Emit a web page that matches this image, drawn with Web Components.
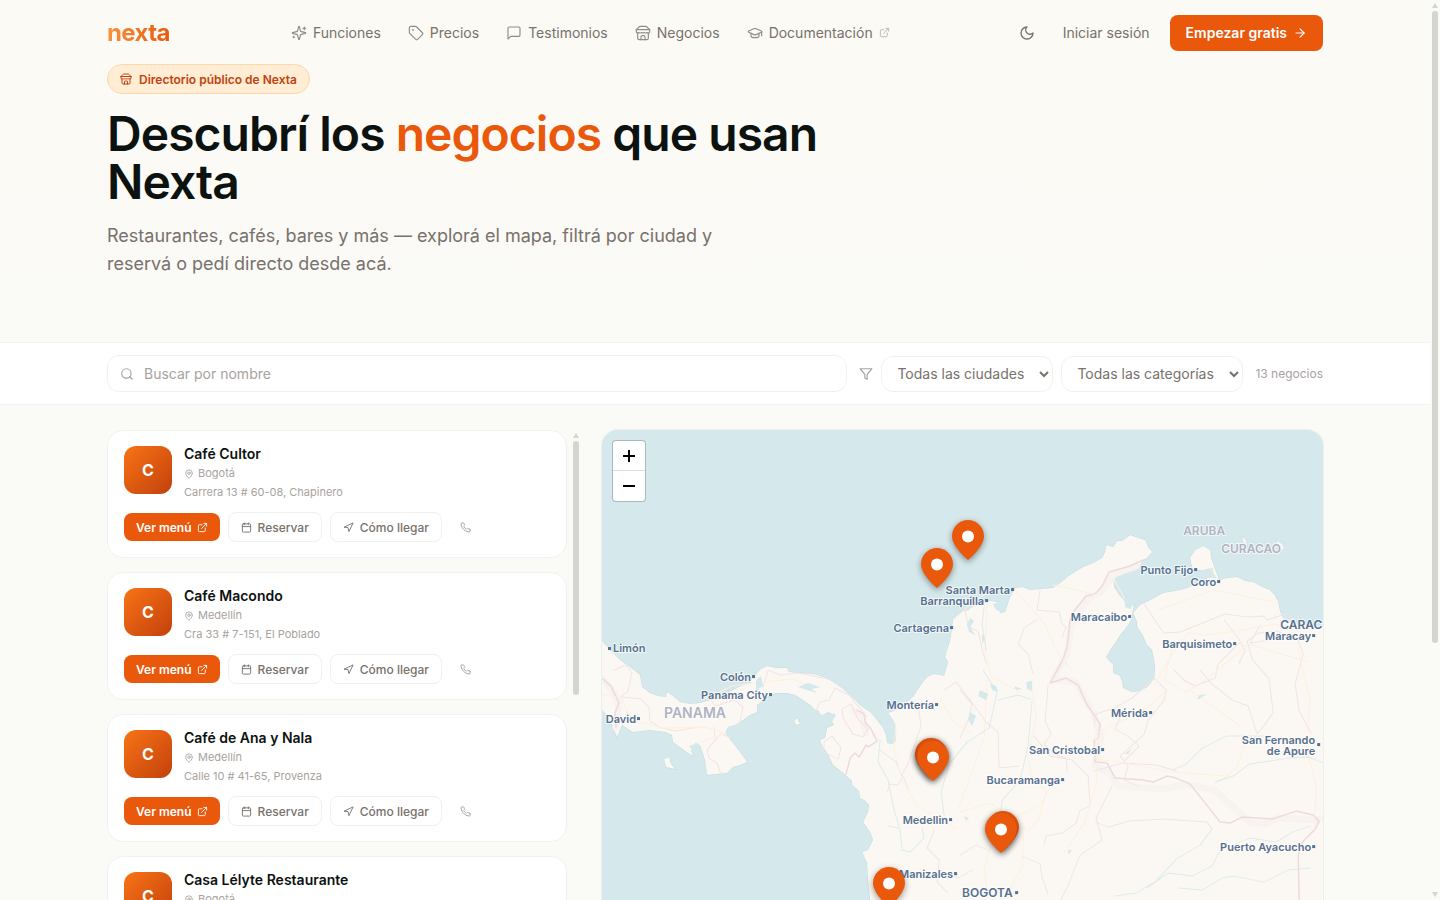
<!DOCTYPE html>
<html lang="es">
<head>
<meta charset="utf-8">
<meta name="viewport" content="width=device-width, initial-scale=1">
<title>Directorio de negocios · Nexta</title>
<style>
  body { margin: 0; background: #fafaf6; color: #78716c; font-family: Inter, "Liberation Sans", sans-serif; font-size: 14px; }
</style>
</head>
<body>
<nexta-app></nexta-app>

<script>
const base = `
  *, *::before, *::after { box-sizing: border-box; }
  :host { display: block; }
  :host([hidden]) { display: none; }
  a { color: inherit; text-decoration: none; }
  button, input, select { font: inherit; color: inherit; margin: 0; }
  button { cursor: pointer; }
  .wrap { max-width: 1280px; margin: 0 auto; padding: 0 32px; }
`;

function define(name, css, html, setup) {
  const template = document.createElement('template');
  customElements.define(name, class extends HTMLElement {
    constructor() {
      super();
      this.attachShadow({ mode: 'open' });
    }
    connectedCallback() {
      if (this.shadowRoot.childNodes.length) return;
      template.innerHTML = `<style>${base}${css}</style>` + (typeof html === 'function' ? html(this) : html);
      this.shadowRoot.append(template.content.cloneNode(true));
      if (setup) setup(this);
    }
  });
}

/* ---------- Icons (24-unit grid, stroked) ---------- */
const icons = {
  sparkles: '<path d="M9.937 15.5A2 2 0 0 0 8.5 14.063l-6.135-1.582a.5.5 0 0 1 0-.962L8.5 9.936A2 2 0 0 0 9.937 8.5l1.582-6.135a.5.5 0 0 1 .963 0L14.063 8.5A2 2 0 0 0 15.5 9.937l6.135 1.581a.5.5 0 0 1 0 .964L15.5 14.063a2 2 0 0 0-1.437 1.437l-1.582 6.135a.5.5 0 0 1-.963 0z"/><path d="M20 3v4M22 5h-4M4 17v2M5 18H3"/>',
  tag: '<path d="M12.586 2.586A2 2 0 0 0 11.172 2H4a2 2 0 0 0-2 2v7.172a2 2 0 0 0 .586 1.414l8.704 8.704a2.426 2.426 0 0 0 3.42 0l6.58-6.58a2.426 2.426 0 0 0 0-3.42z"/><circle cx="7.5" cy="7.5" r=".5" fill="currentColor"/>',
  message: '<path d="M21 15a2 2 0 0 1-2 2H7l-4 4V5a2 2 0 0 1 2-2h14a2 2 0 0 1 2 2z"/>',
  store: '<path d="m2 7 4.41-4.41A2 2 0 0 1 7.83 2h8.34a2 2 0 0 1 1.42.59L22 7"/><path d="M4 12v8a2 2 0 0 0 2 2h12a2 2 0 0 0 2-2v-8"/><path d="M15 22v-4a2 2 0 0 0-2-2h-2a2 2 0 0 0-2 2v4"/><path d="M2 7h20"/><path d="M22 7v3a2 2 0 0 1-2 2a2.7 2.7 0 0 1-1.59-.63.7.7 0 0 0-.82 0A2.7 2.7 0 0 1 16 12a2.7 2.7 0 0 1-1.59-.63.7.7 0 0 0-.82 0A2.7 2.7 0 0 1 12 12a2.7 2.7 0 0 1-1.59-.63.7.7 0 0 0-.82 0A2.7 2.7 0 0 1 8 12a2.7 2.7 0 0 1-1.59-.63.7.7 0 0 0-.82 0A2.7 2.7 0 0 1 4 12a2 2 0 0 1-2-2V7"/>',
  cap: '<path d="M21.42 10.922a1 1 0 0 0-.019-1.838L12.83 5.18a2 2 0 0 0-1.66 0L2.6 9.08a1 1 0 0 0 0 1.832l8.57 3.908a2 2 0 0 0 1.66 0z"/><path d="M22 10v6"/><path d="M6 12.5V16a6 3 0 0 0 12 0v-3.500"/>',
  external: '<path d="M15 3h6v6"/><path d="M10 14 21 3"/><path d="M18 13v6a2 2 0 0 1-2 2H5a2 2 0 0 1-2-2V8a2 2 0 0 1 2-2h6"/>',
  moon: '<path d="M12 3a6 6 0 0 0 9 9 9 9 0 1 1-9-9Z"/>',
  arrow: '<path d="M5 12h14"/><path d="m12 5 7 7-7 7"/>',
  search: '<circle cx="11" cy="11" r="8"/><path d="m21 21-4.300-4.300"/>',
  filter: '<path d="M22 3H2l8 9.460V19l4 2v-8.540z"/>',
  pin: '<path d="M20 10c0 4.993-5.539 10.193-7.399 11.799a1 1 0 0 1-1.202 0C9.539 20.193 4 14.993 4 10a8 8 0 0 1 16 0"/><circle cx="12" cy="10" r="3"/>',
  calendar: '<path d="M8 2v4M16 2v4"/><rect width="18" height="18" x="3" y="4" rx="2"/><path d="M3 10h18"/>',
  navigation: '<path d="m3 11 19-9-9 19-2-8z"/>',
  phone: '<path d="M22 16.920v3a2 2 0 0 1-2.180 2 19.790 19.790 0 0 1-8.630-3.070 19.500 19.500 0 0 1-6-6 19.790 19.790 0 0 1-3.070-8.670A2 2 0 0 1 4.110 2h3a2 2 0 0 1 2 1.720 12.840 12.840 0 0 0 .7 2.810 2 2 0 0 1-.45 2.110L8.090 9.910a16 16 0 0 0 6 6l1.270-1.270a2 2 0 0 1 2.110-.45 12.840 12.840 0 0 0 2.810.7A2 2 0 0 1 22 16.920z"/>'
};
define('nexta-icon', `
  :host { display: inline-flex; flex: none; width: var(--size, 16px); height: var(--size, 16px); }
  svg { width: 100%; height: 100%; display: block; }
`, el => `<svg viewBox="0 0 24 24" fill="none" stroke="currentColor" stroke-width="${el.getAttribute('weight') || 2}" stroke-linecap="round" stroke-linejoin="round" aria-hidden="true">${icons[el.getAttribute('name')]}</svg>`);

/* ---------- Scroll rail ---------- */
define('scroll-rail', `
  :host { display: flex; flex-direction: column; align-items: center; justify-content: space-between; flex: none; width: 10px; padding: 3px 0; gap: 3px; }
  .up, .down { width: 0; height: 0; border: 3px solid transparent; }
  .up { border-top: 0; border-bottom: 5px solid #d4d4d0; }
  .down { border-bottom: 0; border-top: 5px solid #d4d4d0; }
  .track { flex: 1; width: 6px; }
  .thumb { height: var(--thumb, 50%); border-radius: 3px; background: #d4d4d0; }
`, `<span class="up"></span><div class="track"><div class="thumb"></div></div><span class="down"></span>`);

/* ---------- Header ---------- */
define('nav-item', `
  :host { display: inline-flex; }
  a { display: flex; align-items: center; gap: 6px; line-height: 20px; white-space: nowrap; }
  .lead { opacity: .8; }
  .out { --size: 11px; opacity: .5; }
`, el => `<a href="#${el.getAttribute('to')}"><nexta-icon class="lead" name="${el.getAttribute('icon')}" weight="1.75"></nexta-icon><slot></slot>${el.hasAttribute('external') ? '<nexta-icon class="out" name="external"></nexta-icon>' : ''}</a>`);

define('site-header', `
  header.wrap { display: flex; align-items: center; justify-content: space-between; height: 64px; padding-top: 1px; }
  .logo { font-size: 24px; line-height: 32px; font-weight: 700; letter-spacing: -0.025em; background: linear-gradient(90deg, #fb923c, #ea580c); -webkit-background-clip: text; background-clip: text; color: transparent; }
  nav { display: flex; align-items: center; gap: 27px; }
  .actions { display: flex; align-items: center; gap: 20px; }
  .theme { display: grid; place-items: center; width: 32px; height: 32px; padding: 0; border: 0; background: none; }
  .cta { display: flex; align-items: center; gap: 6px; height: 36px; padding: 0 16px; border-radius: 8px; background: #ea580c; color: #fff; font-weight: 600; white-space: nowrap; --size: 14px; }
`, `
  <header class="wrap">
    <a class="logo" href="#inicio">nexta</a>
    <nav aria-label="Principal">
      <nav-item icon="sparkles" to="funciones">Funciones</nav-item>
      <nav-item icon="tag" to="precios">Precios</nav-item>
      <nav-item icon="message" to="testimonios">Testimonios</nav-item>
      <nav-item icon="store" to="negocios">Negocios</nav-item>
      <nav-item icon="cap" to="documentacion" external>Documentación</nav-item>
    </nav>
    <div class="actions">
      <button class="theme" type="button" aria-label="Cambiar tema"><nexta-icon name="moon"></nexta-icon></button>
      <a href="#iniciar">Iniciar sesión</a>
      <a class="cta" href="#empezar">Empezar gratis <nexta-icon name="arrow"></nexta-icon></a>
    </div>
  </header>`);

/* ---------- Hero ---------- */
define('page-hero', `
  .wrap { padding-bottom: 64px; }
  .pill { display: inline-flex; align-items: center; gap: 7px; height: 30px; padding: 0 12px; border: 1px solid #fed7aa; border-radius: 15px; background: #ffedd5; color: #c2410c; font-size: 12px; font-weight: 600; --size: 12px; vertical-align: top; }
  h1 { margin: 16px 0 0; max-width: 768px; font-size: 48px; line-height: 48px; font-weight: 600; letter-spacing: -0.02em; color: #0c120f; }
  ::slotted(em) { font-style: normal; color: #ea580c; }
  p { margin: 16px 0 0; max-width: 640px; font-size: 18px; line-height: 28px; }
`, `
  <section class="wrap">
    <div class="pill"><nexta-icon name="store"></nexta-icon><slot name="tag"></slot></div>
    <h1><slot></slot></h1>
    <p><slot name="lead"></slot></p>
  </section>`);

/* ---------- Filters ---------- */
define('filter-bar', `
  :host { background: #fff; border-top: 1px solid #f3f3f1; border-bottom: 1px solid #f3f3f1; }
  form { display: flex; align-items: center; gap: 12px; height: 61px; }
  .search { flex: 1; display: flex; align-items: center; gap: 10px; height: 37px; padding: 0 12px; border: 1px solid #f1f1ef; border-radius: 12px; color: #a8a29e; --size: 14px; }
  .search input { flex: 1; min-width: 0; border: 0; padding: 0; outline: 0; background: none; color: #0c120f; }
  .search input::placeholder { color: #a8a29e; opacity: 1; }
  .selects { display: flex; align-items: center; gap: 8px; --size: 14px; }
  .selects nexta-icon { color: #a8a29e; }
  select { height: 36px; padding: 0 0 0 11px; border: 1px solid #f1f1ef; border-radius: 12px; background: #fff; }
  .city { width: 172px; }
  .category { width: 182px; }
  .count { font-size: 12px; color: #a8a29e; white-space: nowrap; }
`, `
  <form class="wrap" role="search">
    <label class="search"><nexta-icon name="search"></nexta-icon><input type="text" placeholder="Buscar por nombre" aria-label="Buscar por nombre"></label>
    <div class="selects">
      <nexta-icon name="filter"></nexta-icon>
      <select class="city" aria-label="Ciudad"><option>Todas las ciudades</option></select>
      <select class="category" aria-label="Categoría"><option>Todas las categorías</option></select>
    </div>
    <span class="count">13 negocios</span>
  </form>`);

/* ---------- Business card ---------- */
define('business-card', `
  :host { padding: 15px 16px; border: 1px solid #f1f1ef; border-radius: 16px; background: #fff; }
  .top { display: flex; gap: 12px; }
  .avatar { flex: none; display: grid; place-items: center; width: 48px; height: 48px; border-radius: 12px; background: linear-gradient(135deg, #f97316, #c2410c); color: #fff; font-size: 16px; font-weight: 700; }
  h2 { margin: 0 0 3px; font-size: 14px; line-height: 15px; font-weight: 600; color: #0c120f; }
  .info p { display: flex; align-items: center; gap: 4px; margin: 0; font-size: 11px; line-height: 19px; color: #a8a29e; --size: 10px; }
  .actions { display: flex; align-items: center; gap: 8px; margin-top: 10px; font-size: 12px; font-weight: 500; --size: 11px; }
  .actions a { display: flex; align-items: center; gap: 6px; height: 30px; padding: 0 12px; border: 1px solid #f1f1ef; border-radius: 8px; white-space: nowrap; }
  .actions a.main { gap: 5px; height: 28px; border: 0; background: #ea580c; color: #fff; font-weight: 600; }
  .actions a.call { padding: 0 9px; border-color: transparent; color: #a8a29e; }
`, el => `
  <div class="top">
    <div class="avatar" aria-hidden="true">C</div>
    <div class="info">
      <h2><slot></slot></h2>
      <p><nexta-icon name="pin"></nexta-icon>${el.getAttribute('city')}</p>
      <p><slot name="address"></slot></p>
    </div>
  </div>
  <div class="actions">
    <a class="main" href="#menu">Ver menú <nexta-icon name="external"></nexta-icon></a>
    <a href="#reservar"><nexta-icon name="calendar"></nexta-icon> Reservar</a>
    <a href="#llegar"><nexta-icon name="navigation"></nexta-icon> Cómo llegar</a>
    <a class="call" href="#llamar" aria-label="Llamar"><nexta-icon name="phone"></nexta-icon></a>
  </div>`);

define('business-list', `
  :host { display: flex; gap: 4px; height: 690px; padding-right: 7px; }
  .items { flex: 1; min-width: 0; display: flex; flex-direction: column; gap: 14px; overflow-y: auto; scrollbar-width: none; }
  scroll-rail { --thumb: 38%; }
`, `<div class="items"><slot></slot></div><scroll-rail aria-hidden="true"></scroll-rail>`);

/* ---------- Map ---------- */
define('map-pin', `
  :host { position: absolute; width: 32px; height: 40px; }
  button { display: block; width: 32px; height: 40px; padding: 0; border: 0; background: none; }
  svg { display: block; overflow: visible; filter: drop-shadow(0 2px 3px rgba(0,0,0,.4)); }
`, el => `<button type="button" aria-label="${el.getAttribute('label')}"><svg width="32" height="40" viewBox="0 0 32 40"><path d="M16 0C7.200 0 0 7.200 0 16c0 11 16 24 16 24s16-13 16-24C32 7.200 24.800 0 16 0z" fill="#ea580c"/><circle cx="16" cy="16.500" r="6" fill="#fff"/></svg></button>`,
  el => { el.style.left = el.getAttribute('x') + 'px'; el.style.top = el.getAttribute('y') + 'px'; });

const cities = [
  [1013, 594, 'Santa Marta'], [987, 605, 'Barranquilla'], [952, 632, 'Cartagena'],
  [754, 681, 'Colón'], [771, 699, 'Panama City'], [639, 723, 'David'],
  [937, 709, 'Montería'], [951, 824, 'Medellin'], [956, 878, 'Manizales'],
  [1063, 784, 'Bucaramanga'], [1103, 754, 'San Cristobal'], [1151, 717, 'Mérida'],
  [1130, 621, 'Maracaibo'], [1196, 574, 'Punto Fijo'], [1219, 586, 'Coro'],
  [1235, 648, 'Barquisimeto'], [1314, 640, 'Maracay'], [1314, 851, 'Puerto Ayacucho']
];
const label = ([x, y, name]) => `<text x="${x - 3}" y="${y}" text-anchor="end">${name}</text><rect x="${x - 2}" y="${y - 6}" width="3" height="3"/>`;

define('business-map', `
  :host { position: relative; height: 690px; border-radius: 16px; overflow: hidden; background: #d5e8eb; box-shadow: 0 0 0 1px #eef0ee; }
  svg.map { display: block; width: 100%; height: 100%; }
  .land { fill: #fbf8f3; stroke: #c3dce1; stroke-width: 1; paint-order: stroke; }
  .water { fill: #d5e8eb; }
  .country { stroke: #ecdade; stroke-width: 1.5; }
  .glow { stroke: #f8f3f0; stroke-width: 7; }
  .state { stroke: #f2e3e5; stroke-width: 1; }
  .road { stroke: #fdf0dc; stroke-width: 1; }
  .river { stroke: #dcebed; stroke-width: 1; }
  .lines path { fill: none; stroke-linejoin: round; stroke-linecap: round; }
  .names { font-family: Inter, "Liberation Sans", sans-serif; font-size: 11px; font-weight: 600; fill: #56708f; }
  .names text { paint-order: stroke; stroke: rgba(255,255,255,.7); stroke-width: 2px; stroke-linejoin: round; }
  .names .capital { font-size: 12px; }
  .names .nation { fill: #b0b3c0; font-size: 12px; }
  .names .large { font-size: 14px; }
  .zoom { position: absolute; left: 11px; top: 11px; display: flex; flex-direction: column; width: 32px; border-radius: 3px; background: #fff; box-shadow: 0 0 0 1px #a9babd; }
  .zoom button { display: grid; place-items: center; height: 30px; padding: 0; border: 0; border-bottom: 1px solid #ddd; background: none; color: #000; }
  .zoom button:last-child { border-bottom: 0; }
`, `
  <svg class="map" viewBox="602 430 721 690" preserveAspectRatio="xMinYMin slice" role="img" aria-label="Mapa de Colombia, Panamá y Venezuela">
    <path class="land" d="M602 641 612 652 620 660 630 667 640 675 642 687 650 693 658 696 666 697 667 692 673 696 680 702 690 704 700 703 717 698 733 690 741 686 750 683 752 678 757 673 761 669 767 666 776 668 787 668 789 672 800 673 813 674 824 677 833 682 842 688 853 698 861 706 870 712 877 720 883 728 886 735 887 743 892 744 896 741 896 728 893 720 888 713 896 710 902 707 908 701 913 697 918 689 923 682 927 677 933 674 940 675 944 676 948 662 945 657 947 650 950 641 953 620 956 616 962 612 968 610 976 604 985 600 997 602 1000 613 1005 612 1010 597 1015 588 1022 587 1030 590 1040 589 1053 588 1060 583 1070 575 1083 567 1093 563 1102 558 1105 552 1106 545 1113 547 1117 541 1122 541 1130 535 1138 538 1145 540 1148 547 1152 552 1147 558 1143 560 1140 565 1130 568 1120 570 1113 575 1114 587 1119 595 1123 599 1128 607 1134 605 1132 613 1132 618 1128 625 1120 635 1115 643 1110 650 1106 657 1113 665 1113 673 1120 676 1122 682 1123 688 1132 692 1140 691 1147 687 1154 679 1155 668 1154 660 1152 650 1147 645 1142 634 1137 627 1137 622 1133 613 1140 605 1150 600 1163 593 1180 590 1190 587 1195 583 1203 582 1209 577 1216 578 1212 568 1203 570 1193 570 1191 563 1190 558 1195 550 1203 546 1210 550 1211 558 1214 567 1219 580 1227 578 1237 577 1245 581 1253 582 1262 587 1270 590 1275 596 1278 602 1280 612 1284 620 1300 625 1330 627 1330 1130 860 1130 870 950 870 900 868 880 867 863 862 852 868 850 873 840 870 832 863 822 868 812 869 805 864 800 860 798 859 791 852 785 852 781 843 773 833 765 828 754 822 746 820 740 825 738 827 728 834 725 831 720 836 716 828 712 820 717 819 711 815 710 810 705 803 700 795 695 787 693 776 693 767 697 761 702 757 705 757 712 750 715 743 720 735 725 728 727 725 733 733 743 740 752 747 762 740 765 733 767 727 773 716 774 707 775 705 760 700 745 695 743 696 749 691 750 693 756 685 751 680 747 673 742 672 735 665 732 650 730 633 732 622 725 617 737 613 727 607 715 602 710Z"/>
    <g class="land"><path d="m664 759 5-2 2 7 4 5-9-2z"/><path d="m794 721 3-3 3 6-4 1z"/><path d="m1242 537 3 2 2 6-4-3zM1276 540l6 4 2 5-4 1z"/></g>
    <g class="lines">
      <path class="glow" d="M603 679q12 14 16 24l-3 24M854 711l8 8 4 14M1136 566l-22 8-13 18-12 6-18 28-4 28-14 25 22 3 18 30 8 25-6 28 14 8 10 13 45 3 21-5 30 6 35 33 14 1 14-6 36 2 28-6 15 8-12 24-12 20 1 50"/>
      <path class="country" d="M603 679l8 7 8 17-4 10 1 14M857 710l7 4 1 8 6 7 6 12-9 6-2-2-7 12-4-4-5 5-4 16M1143 560l-13 6-21 6-7 14-7 8-9 2-12 15-4 8-3 28-4 12-13 24 16-5 12 7 8 18 14 21-2 14-4 2 1 22 12 1 8 15 28 2 10 2 14-6 9 2 14 6 30 38 10 1 12-6 30 2 24-8 17 4 6 6-4 8-12 12-5 14 1 46"/>
      <path class="state" d="M614 670l12-5 6 8-4 18-7 5M621 697l20 2 8 8 1 14 12 7 14 3 22-4M711 700l4 6 20-6 8 7-3 14-4 6M714 727l1 13-8 10 2 8 8 5 4 11M716 740l4-6 10 3M763 688l5-18 12 5 18-2 30 6M816 711l4-9 9-2 6-12 14 7 18 22M842 709l9-5 7 15 10 10-5 8-10-3-10-16zM824 742l8-6 9 12-3 11-14-7z"/>
      <path class="state" d="M880 750l16 12 6 15-4 8-8-1-3 8M918 706l3 20-14 40-5 8 6 14M944 690l12-8 14 18 16 22 12 10 1 36 20-2M965 610l3 17 10 4 4 18 4 14M1040 590l-3 20 22 2 3 12 4 3-4 10M1036 620l-12 8-6 16 10 10 5 20M1048 685l-3 36 6 13-7 10 10 10 12 4 1 14M1034 736l16 20 22 4 16 16 2 30-10 4-4 13-14 10-16 3-2 8M1112 786l-16 32 6 22-22 15-12 30-8 16M1095 822l14 5 20-6 34-2 44 3 5 7M1144 604l8 12 8 12 4 5 16-1 20-8 25-10 22 3 17-1 3 4 18-6 1 8 13-6M1154 678l-22 20-18 10-18 6-2 10M1154 678l12 12-2 10-16 20-4 14-24 22 8 10-4 14 14 6M1125 760l14-14-10-9-14-8 6-14M1094 771l28-8 34 2 20 6M1200 670l12 14 20 16 16 6 9 28 4-5 12-16-4-34-17-20-5-18 11-8 19-2 14 7 15-2M1240 642l-22 22-3 14-20 8-10-5-12-12M1298 640l5 14-8 30 4 27 12 22M1224 620l14 18 7 12-6 13M1260 625l-10 18 20-3 10-6 12 2M960 690l12 14-4 16-8 18M934 830l-7 18 12 12-2 22 10 10M960 855l16-10 12 5M1022 856l18 8 2 14 6 16M940 870l18 8 14-8"/>
      <path class="road" d="M602 694l20 4 8 22 34 8 40-1 22 6M704 699l28-13 22-3 38-4 20 8M700 742l26-9M896 722l-2 28 8 30 14 24 24 16 16 8M953 620l20-18 22-14M987 602l-2 52 6 22 32 18M1015 590l30 34 10 24 16 22M1053 585l44 10M1154 685l20-34 14-18 20 2 34-5 32-6 14 6M1190 690l50 36M1166 690l-16 16-16 9-38 18-2 26 26 3 30 6 20 4 60 4M1174 640l-10 40 22 12 22-14 40-34 60 18M1298 650l12 50-4 46 10 40-2 44M987 680l-3 58-10 28-16 44M1032 687l4 30-8 40 4 20 14 14-6 26-12 14M960 812l30-9 22 16 28-14 12-22M1250 730l-14 38-18 14M940 700l14 22 18 12M994 832l-10 38 4 28M1024 826l-2 40-16 30M1098 735l-2 50-12 38-20 30M1114 580l6 10 10 20M1158 610l56-20 60 12M1210 568l8 12"/>
      <path class="river" d="M880 740l-2 22 10 18 6 30 6 20 2 20 8 2 14-14-2-10M888 826l10 2M985 600l-3 24 4 26M983 670l14 22-8 36-22 14-18 22-8 28 4 30M1032 700l-4 46-8 34-18 20-2 20M998 700l20-5 12 4M1172 770l14-6 16-16 24-12 40 0M1215 782l18-6 16-12 40-6 20-1 14 6M1310 826l-18 6-16 10-26-4-30 12-8 16-20 10-24-3-20 14M1212 829l-12 16-24 14-20 22-20 12-22 3M1310 868l-22 2-24 12-30-6-12 2-20 12-24-2"/>
    </g>
    <g class="water"><path d="m756 680 5-4 2 10-7 5zM798 687l10-4 12 4-8 2 5 4-10-3zM640 675l10 8 14 7-10 4-10-6zM689 746l9-3 2 12-6-2zM816 713l12 3 7-3-2 8-9 2zM993 604l12-4-3 12-6-2zM970 618l4 3-4 6 5 8-6-3-2-8zM982 634l3 4-3 6zM1124 598l9 3-2 8-6-2zM980 690l8 4-2 6-8-4zM990 684l6 2 2 6-6-2zM1026 682l6-1 0 10-5-2zM1014 686l8 3-6 1zM970 712l6 4-4 10-4-6zM1207 694l-10 6 2-5zM1132 748l-4 6-4 0zM1068 850l4 0-4 5zM964 816l5 2-3 3zM1200 570l8 0 3 8-10 0z"/></g>
    <g class="names">
      ${cities.map(label).join('')}
      <text x="613" y="652">Limón</text><rect x="608" y="647" width="3" height="3"/>
      <text x="1315" y="744" text-anchor="end">San Fernando</text>
      <text x="1315" y="755" text-anchor="end">de Apure</text><rect x="1317" y="743" width="3" height="3"/>
      <text class="capital" x="1280" y="629">CARAC</text>
      <text class="capital" x="962" y="897">BOGOTA</text><rect x="1015" y="891" width="3" height="3"/>
      <text class="nation large" x="664" y="718">PANAMA</text>
      <text class="nation" x="1183" y="535">ARUBA</text>
      <text class="nation" x="1221" y="553">CURACAO</text>
    </g>
  </svg>
  <slot></slot>
  <div class="zoom">
    <button type="button" aria-label="Acercar"><svg width="14" height="14" viewBox="0 0 14 14" aria-hidden="true"><path d="M1 7h12M7 1v12" stroke="#000" stroke-width="2"/></svg></button>
    <button type="button" aria-label="Alejar"><svg width="14" height="14" viewBox="0 0 14 14" aria-hidden="true"><path d="M1 7h12" stroke="#000" stroke-width="2"/></svg></button>
  </div>`);

/* ---------- Page ---------- */
define('nexta-app', `
  :host { display: flex; height: 100vh; }
  main { flex: 1; min-width: 0; overflow-y: auto; scrollbar-width: none; }
  .intro { background: linear-gradient(180deg, #fcfaf5, #fafaf6); }
  .results { display: grid; grid-template-columns: minmax(0, 2fr) minmax(0, 3fr); gap: 14px; padding-top: 25px; padding-bottom: 135px; }
  .page-rail { --thumb: 72%; }
`, `
  <main>
    <div class="intro">
      <site-header></site-header>
      <page-hero>
        <span slot="tag">Directorio público de Nexta</span>
        Descubrí los <em>negocios</em> que usan Nexta
        <span slot="lead">Restaurantes, cafés, bares y más — explorá el mapa, filtrá por ciudad y reservá o pedí directo desde acá.</span>
      </page-hero>
    </div>
    <filter-bar></filter-bar>
    <div class="wrap results">
      <business-list>
        <business-card city="Bogotá">Café Cultor<span slot="address">Carrera 13 # 60-08, Chapinero</span></business-card>
        <business-card city="Medellín">Café Macondo<span slot="address">Cra 33 # 7-151, El Poblado</span></business-card>
        <business-card city="Medellín">Café de Ana y Nala<span slot="address">Calle 10 # 41-65, Provenza</span></business-card>
        <business-card city="Bogotá">Casa Lélyte Restaurante</business-card>
      </business-list>
      <business-map>
        <map-pin x="350" y="90" label="Negocio en Santa Marta"></map-pin>
        <map-pin x="319" y="118" label="Negocio en Cartagena"></map-pin>
        <map-pin x="313" y="308" label="Negocio en Medellín, Laureles"></map-pin>
        <map-pin x="314" y="309" label="Negocio en Medellín, El Poblado"></map-pin>
        <map-pin x="315" y="311" label="Negocio en Medellín, Provenza"></map-pin>
        <map-pin x="385" y="381" label="Negocio en Bogotá, Chapinero"></map-pin>
        <map-pin x="383" y="383" label="Negocio en Bogotá, Centro"></map-pin>
        <map-pin x="271" y="437" label="Negocio en Cali"></map-pin>
      </business-map>
    </div>
  </main>
  <scroll-rail class="page-rail" aria-hidden="true"></scroll-rail>`);
</script>
</body>
</html>
